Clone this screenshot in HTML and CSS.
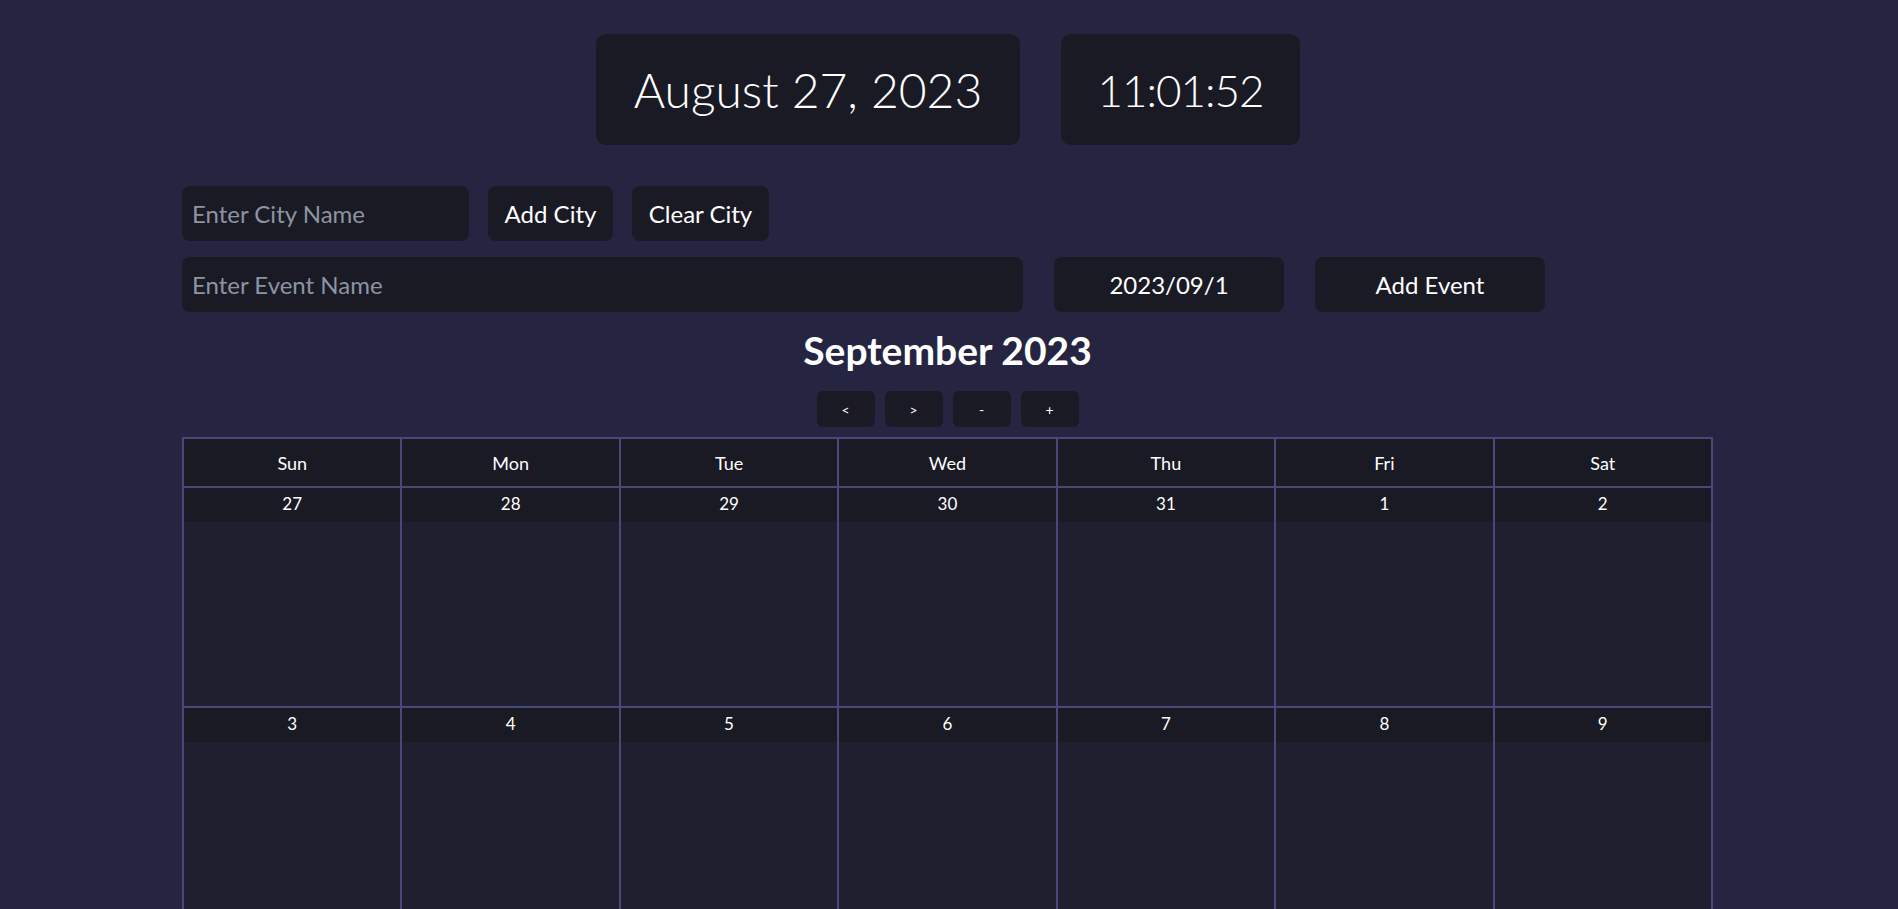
FILE: index.html
```html
<!DOCTYPE html>
<html>
<head>
<meta charset="utf-8">
<link rel="stylesheet" href="styles.css">
</head>
<body>
<div class="clock-row">
  <div class="clock-box date-box">August 27, 2023</div>
  <div class="clock-box time-box">11:01:52</div>
</div>
<div class="container">
  <div class="form-row">
    <input class="field city-field" type="text" placeholder="Enter City Name">
    <button class="btn btn-add-city">Add City</button>
    <button class="btn btn-clear-city">Clear City</button>
  </div>
  <div class="form-row event-row">
    <input class="field event-field" type="text" placeholder="Enter Event Name">
    <input class="field date-field" type="text" value="2023/09/1">
    <button class="btn btn-add-event">Add Event</button>
  </div>
  <h1 class="month-title">September 2023</h1>
  <div class="nav">
    <button class="nav-btn">&lt;</button>
    <button class="nav-btn">&gt;</button>
    <button class="nav-btn">-</button>
    <button class="nav-btn">+</button>
  </div>
  <table class="calendar">
    <thead>
      <tr><th>Sun</th><th>Mon</th><th>Tue</th><th>Wed</th><th>Thu</th><th>Fri</th><th>Sat</th></tr>
    </thead>
    <tbody>
      <tr>
        <td><div class="num">27</div><div class="events"></div></td>
        <td><div class="num">28</div><div class="events"></div></td>
        <td><div class="num">29</div><div class="events"></div></td>
        <td><div class="num">30</div><div class="events"></div></td>
        <td><div class="num">31</div><div class="events"></div></td>
        <td><div class="num">1</div><div class="events"></div></td>
        <td><div class="num">2</div><div class="events"></div></td>
      </tr>
      <tr>
        <td><div class="num">3</div><div class="events"></div></td>
        <td><div class="num">4</div><div class="events"></div></td>
        <td><div class="num">5</div><div class="events"></div></td>
        <td><div class="num">6</div><div class="events"></div></td>
        <td><div class="num">7</div><div class="events"></div></td>
        <td><div class="num">8</div><div class="events"></div></td>
        <td><div class="num">9</div><div class="events"></div></td>
      </tr>
    </tbody>
  </table>
</div>
</body>
</html>
```

FILE: styles.css
```css
* { box-sizing: border-box; }
html, body {
  margin: 0;
  padding: 0;
  background: #252541;
  color: #ffffff;
  font-family: "Lato", "Open Sans", sans-serif;
}
.clock-row {
  display: flex;
  justify-content: center;
  gap: 41px;
  padding-top: 34px;
  padding-right: 2px;
}
.clock-box {
  background: #1a1a25;
  border-radius: 10px;
  height: 111px;
  display: flex;
  align-items: center;
  justify-content: center;
  font-size: 48px;
  font-weight: 300;
}
.date-box { width: 424px; }
.time-box { width: 239px; letter-spacing: -1px; font-size: 44px; }
.container {
  width: 1531px;
  margin: 0 0 0 182px;
}
.form-row {
  display: flex;
  gap: 19px;
  margin-top: 41px;
  height: 55px;
}
.event-row {
  margin-top: 16px;
  gap: 31px;
}
.field {
  background: #1a1a25;
  border: none;
  border-radius: 8px;
  color: #ffffff;
  font-family: inherit;
  font-size: 24px;
  padding: 0 10px;
  outline: none;
  height: 55px;
}
.field::placeholder { color: #8b94a3; }
.city-field { width: 287px; }
.event-field { width: 841px; }
.date-field { width: 230px; text-align: center; }
.btn {
  background: #1a1a25;
  border: none;
  border-radius: 8px;
  color: #ffffff;
  font-family: inherit;
  font-size: 24px;
  height: 55px;
  padding: 0;
}
.btn-add-city { width: 125px; }
.btn-clear-city { width: 137px; }
.btn-add-event { width: 230px; }
.month-title {
  text-align: center;
  font-size: 39px;
  font-weight: 700;
  line-height: 44px;
  margin: 16px 0 0;
}
.nav {
  display: flex;
  justify-content: center;
  gap: 10px;
  margin-top: 19px;
}
.nav-btn {
  width: 58px;
  height: 36px;
  background: #1a1a25;
  border: none;
  border-radius: 6px;
  color: #ffffff;
  font-family: inherit;
  font-size: 14px;
  padding: 0;
}
.calendar {
  width: 100%;
  margin-top: 10px;
  border-collapse: collapse;
  table-layout: fixed;
  border: 2px solid #4a4878;
}
.calendar th {
  border: 2px solid #4a4878;
  background: #1a1a25;
  height: 49px;
  font-size: 18px;
  font-weight: 400;
  padding: 0;
}
.calendar td {
  border: 2px solid #4a4878;
  background: #1f1f2f;
  height: 220px;
  padding: 0;
  vertical-align: top;
}
.num {
  background: #1a1a25;
  height: 34px;
  display: flex;
  align-items: center;
  justify-content: center;
  padding-bottom: 4px;
  font-size: 17px;
}
.events { height: 184px; }
```
